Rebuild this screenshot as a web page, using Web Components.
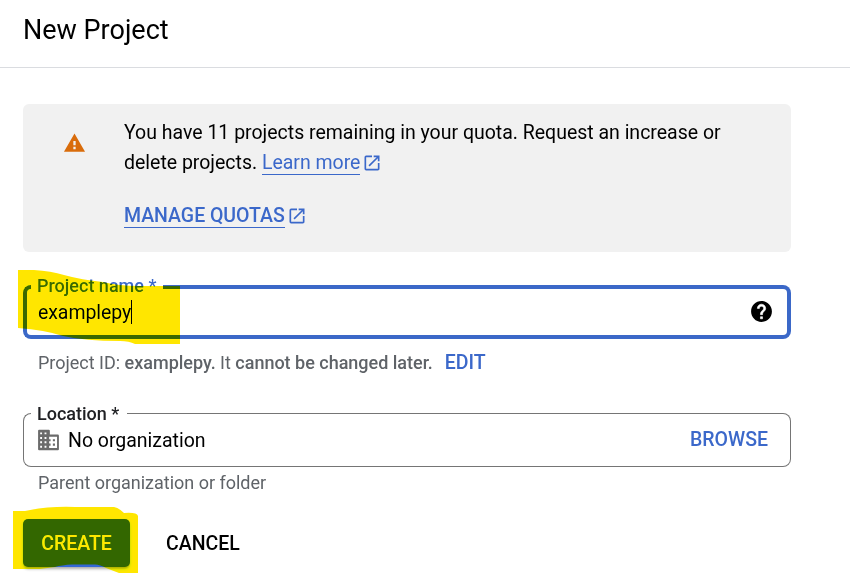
<!DOCTYPE html>
<html lang="en"><head><meta charset="utf-8"><title>New Project</title>
<style>body{margin:0;background:#fff;overflow:hidden}</style></head><body>
<new-project-page></new-project-page>
<script>
const define=(name,html)=>{const t=document.createElement('template');t.innerHTML=html;
customElements.define(name,class extends HTMLElement{constructor(){super();this.attachShadow({mode:'open'}).append(t.content.cloneNode(true));}});};

define('open-icon',`<style>:host{display:inline-block;width:20px;height:20px}svg{display:block}</style>
<svg width="20" height="20" viewBox="0 0 24 24" fill="#3b68ca"><path d="M19 19H5V5h7V3H5a2 2 0 0 0-2 2v14a2 2 0 0 0 2 2h14c1.1 0 2-.9 2-2v-7h-2v7zM14 3v2h3.59l-9.83 9.83 1.41 1.41L19 6.41V10h2V3h-7z"/></svg>`);

define('page-header',`<style>:host{display:flex;box-sizing:border-box;height:68px;padding:12px 23px 0;border-bottom:1px solid #dadce0}
h1{margin:0;font:400 27px/36px Roboto,sans-serif}</style><h1><slot></slot></h1>`);

define('ext-link',`<style>:host{display:inline-flex;align-items:center;gap:3px;color:#3b68ca;line-height:24px;letter-spacing:-.02px}
span{border-bottom:1px solid #3b68ca;height:23px}open-icon{margin:-1px 0 0 -1px}</style><span><slot></slot></span><open-icon></open-icon>`);

define('quota-notice',`<style>:host{display:flex;box-sizing:border-box;height:148px;border-radius:6px;background:#f1f1f1;padding:14px 40px 0}
svg{flex:none;margin:13px 38px 0 0}div{white-space:nowrap;line-height:30px}.m{margin-top:23px;font-weight:500}p{margin:0}</style>
<svg width="23" height="24" viewBox="0 0 24 24"><path fill="#d96c0b" d="M1 21h22L12 2 1 21zm12.200-2.500h-2.400v-2.500h2.400v2.500zm0-4.200h-2.400v-4.300h2.400v4.300z"/></svg>
<div><slot></slot><p class="m"><slot name="action"></slot></p></div>`);

define('outlined-field',`<style>:host{display:block;position:relative;height:54px;--c:#757575;--b:1px;--r:8px;--lc:#202124;--notch:96px}
:host([focused]){--c:#3b68c8;--b:4px;--lc:#3b68ca;--notch:132px}
.o{position:absolute;inset:0;display:flex}.o i{box-sizing:border-box;border:0 solid var(--c);border-bottom-width:var(--b)}
.l{width:8px;border-left-width:var(--b)!important;border-top-width:var(--b)!important;border-radius:var(--r) 0 0 var(--r)}
.n{width:var(--notch)}.r{flex:1;border-right-width:var(--b)!important;border-top-width:var(--b)!important;border-radius:0 var(--r) var(--r) 0}
label{position:absolute;left:14px;top:-10px;font:500 18px/22px Roboto,sans-serif;color:var(--lc);white-space:nowrap}
.c{position:relative;display:flex;align-items:center;height:54px;box-sizing:border-box;padding:0 17px 0 15px}</style>
<div class="o"><i class="l"></i><i class="n"></i><i class="r"></i></div><label><slot name="label"></slot></label><div class="c"><slot></slot></div>`);

define('text-value',`<style>:host{display:flex;align-items:center;flex:1;padding-top:2px;letter-spacing:-.08px}i{width:1px;height:24px;margin-top:-2px;background:#000}</style><slot></slot><i></i>`);

define('help-icon',`<style>:host{display:block;margin-top:-1px}svg{display:block}</style><svg width="25" height="25" viewBox="0 0 24 24"><path d="M12 2C6.480 2 2 6.480 2 12s4.480 10 10 10 10-4.480 10-10S17.520 2 12 2zm1 17h-2v-2h2v2zm2.070-7.750l-.9.920C13.450 12.900 13 13.500 13 15h-2v-.5c0-1.100.45-2.100 1.170-2.830l1.240-1.260c.37-.36.59-.86.59-1.410 0-1.100-.9-2-2-2s-2 .9-2 2H8c0-2.210 1.790-4 4-4s4 1.790 4 4c0 .88-.36 1.680-.93 2.250z"/><path fill="none" stroke="#fff" stroke-width=".6" d="M8 9c0-2.210 1.790-4 4-4s4 1.790 4 4c0 .88-.36 1.680-.93 2.250l-.9.920C13.450 12.900 13 13.500 13 15h-2v-.5c0-1.100.45-2.100 1.170-2.830l1.240-1.260c.37-.36.59-.86.59-1.410 0-1.100-.9-2-2-2s-2 .9-2 2zM11 17h2v2h-2z"/></svg>`);

define('building-icon',`<style>:host{display:block}svg{display:block}</style><svg width="25" height="26" viewBox="0 0 24 24" preserveAspectRatio="none"><path fill="#6b6b6b" fill-rule="evenodd" d="M13.300 7V3.500Q13.300 2.500 12.300 2.500H3Q2 2.500 2 3.500V20.500Q2 21.500 3 21.500H21Q22 21.500 22 20.500V8Q22 7 21 7ZM4 5h1.800v1.800H4zM8.200 5h1.800v1.800H8.200zM4 9.200h1.800v1.800H4zM8.200 9.200h1.800v1.800H8.200zM4 13.200h1.800v1.800H4zM8.200 13.200h1.800v1.800H8.200zM4 17.300h1.800v1.800H4zM8.200 17.300h1.800v1.800H8.200zM12.600 9H20.200V19.300H12.600V17.300H14V15.200H12.600V13.200H14V11.200H12.600ZM16.200 11.200h2v2h-2zM16.200 15.200h2v2h-2z"/></svg>`);

define('action-button',`<style>:host{display:flex;align-items:center;justify-content:center;box-sizing:border-box;height:48px;padding-top:1px;border-radius:5px;font-weight:500;color:#000}
:host([primary]){width:107px;background:#3367d6;color:#fff;box-shadow:0 2px 3px #0005}</style><slot></slot>`);

define('marker-strokes',`<style>:host{position:absolute;inset:0;mix-blend-mode:darken;pointer-events:none}svg{display:block}</style>
<svg width="850" height="580" fill="#ffe600"><path d="M18 270H34Q51 271 64 275Q82 280 103 282Q118 286 140 286H180V344H135Q129 341 120 341Q85 341 63 336Q45 330 18 328Z"/>
<path d="M13 511H25Q48 506 75 507H114Q119 508 124 513Q137 512 138 516V573H119Q111 570 106 568Q100 564.500 95 564.500H72Q62 565 55 567L40 569H13Z"/></svg>`);

define('new-project-page',`<style>:host{display:block;position:relative;width:850px;height:580px;background:#fff;isolation:isolate;overflow:hidden;font:400 19.5px/30px Roboto,sans-serif;color:#000}
main{width:768px;padding:36px 0 0 23px}outlined-field{margin-top:33px}
#l1,#l2{letter-spacing:-.01px}
.hint{display:flex;height:24px;margin:12px 0 0 15px;font-size:18px;line-height:24px;color:#5f6368;white-space:pre;letter-spacing:-.01px}
.hint b{font-weight:500}.blue{color:#3b68ca;font-weight:500}.edit{margin-left:12px;font-size:19.5px}
.loc{margin-top:38px}.loc building-icon{margin:-1px 0 0 -2px}.no{flex:1;margin-left:7px;padding-top:2px;letter-spacing:-.02px}.loc .blue{margin-right:6px}
.parent{margin-top:4px}footer{display:flex;gap:36px;margin-top:24px}</style>
<page-header><span>New Project</span></page-header>
<main><quota-notice><div id="l1">You have 11 projects remaining in your quota. Request an increase or</div><span id="l2">delete projects.</span> <ext-link>Learn more</ext-link><ext-link slot="action">MANAGE QUOTAS</ext-link></quota-notice>
<outlined-field focused><span slot="label">Project name *</span><text-value>examplepy</text-value><help-icon></help-icon></outlined-field>
<div class="hint"><span>Project ID: <b>examplepy.</b> It <b>cannot be changed later.</b></span><span class="blue edit">EDIT</span></div>
<outlined-field class="loc"><span slot="label">Location *</span><building-icon></building-icon><span class="no">No organization</span><span class="blue">BROWSE</span></outlined-field>
<div class="hint parent"><span>Parent organization or folder</span></div>
<footer><action-button primary><span>CREATE</span></action-button><action-button><span>CANCEL</span></action-button></footer></main>
<marker-strokes></marker-strokes>`);
</script></body></html>
